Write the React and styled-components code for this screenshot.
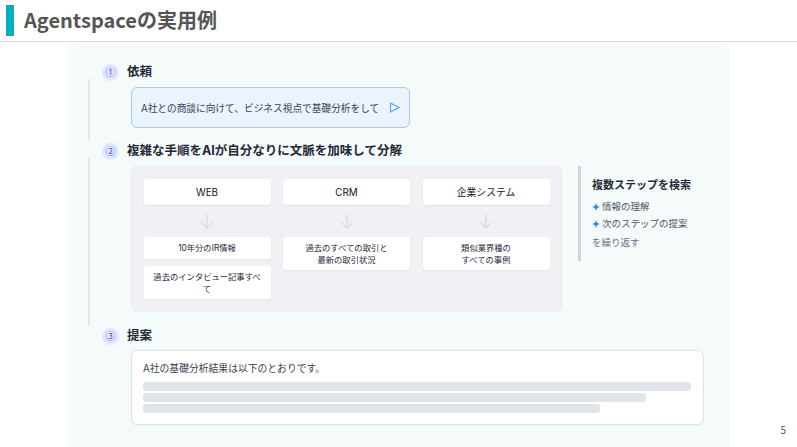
import React from "react";
import styled, { createGlobalStyle } from "styled-components";

const Global = createGlobalStyle`
  html, body { margin: 0; padding: 0; background: #fff; }
  body { font-family: Inter, "Noto Sans CJK JP", sans-serif; overflow: hidden; }
  * { box-sizing: border-box; }
`;
const Page = styled.div`
  width: 797px; height: 447px; display: flex; flex-direction: column; background: #fff; position: relative; overflow: hidden;
`;
const Header = styled.header`
  height: 42px; flex: none; display: flex; align-items: flex-start; gap: 10px; padding: 5px 0 0 6px; border-bottom: 1px solid #dedede;
`;
const Accent = styled.div`width: 8px; height: 31px; background: #00aebd;`;
const Title = styled.h1`
  margin: 0; font: 700 20px/30px "Noto Sans CJK JP", sans-serif; color: #555;
`;
const Main = styled.main`
  flex: 1; margin-left: 68px; width: 661px; background: #f5fafa; padding: 22px 0 0 20px; display: flex; flex-direction: column;
`;
const StepHead = styled.div`
  height: 16px; display: flex; align-items: center; gap: 8px; padding-left: 14px;
`;
const Badge = styled.span`
  width: 17px; height: 17px; border-radius: 50%; background: #e0e7ff; color: #4f46e5; display: flex; align-items: center; justify-content: center;
  font: 400 10px/1 "Noto Sans CJK JP", sans-serif;
`;
const StepTitle = styled.h2`
  margin: 0; font: 700 12.5px/16px Inter, "Noto Sans CJK JP", sans-serif; color: #1f2937;
`;
const Body = styled.div`
  margin-top: ${p => p.$top}px; padding: 8px 0 ${p => p.$bottom}px 41px; border-left: 2px solid ${p => p.$rail ? "#e5e7eb" : "transparent"};
  margin-bottom: ${p => p.$gap}px;
`;
const Prompt = styled.div`
  width: 279px; height: 41px; border: 1px solid #a6c9f8; border-radius: 6px; background: #eaf3fe; display: flex; align-items: center; justify-content: space-between;
  padding: 0 9px 0 9px; font-size: 9.7px; color: #374151;
`;
const Row = styled.div`display: flex; gap: 16px;`;
const Group = styled.div`
  width: 431px; height: 146px; background: #f0f0f5; border: 1px solid #eaeaef; border-radius: 6px; padding: 12px 11.5px; display: grid; grid-template-columns: repeat(3, 127px); column-gap: 12.5px; align-items: start;
`;
const Col = styled.div`display: flex; flex-direction: column; align-items: stretch;`;
const Source = styled.div`
  height: 26px; background: #fff; border-radius: 3px; box-shadow: 0 1px 2px rgba(0,0,0,.06); display: flex; align-items: center; justify-content: center; font-size: 9.8px; color: #111827;
`;
const ArrowWrap = styled.div`height: 32px; display: flex; align-items: center; justify-content: center; color: #d8dbe0;`;
const Detail = styled.div`
  background: #fff; border-radius: 3px; box-shadow: 0 1px 2px rgba(0,0,0,.06); padding: 4.5px 8px; margin-bottom: 7px; text-align: center; font-size: 8.3px; line-height: 12px; color: #1f2937; min-height: 22px; display: flex; align-items: center; justify-content: center; white-space: pre-line;
`;
const Note = styled.aside`
  width: 160px; height: 95px; border-left: 3px solid #d1d5db; padding: 12px 0 0 11px; 
`;
const NoteTitle = styled.div`font: 700 11px/14px Inter, "Noto Sans CJK JP", sans-serif; color: #1f2937; margin-bottom: 6px;`;
const NoteItem = styled.div`
  display: flex; align-items: center; gap: 2px; font-size: 9.5px; line-height: 17px; color: #4b5563;
`;
const Spark = styled.svg`width: 8px; height: 8px; fill: #3b82f6; flex: none;`;
const NoteFoot = styled.div`font-size: 9.5px; line-height: 17px; color: #6b7280; margin-top: 2px;`;
const Result = styled.div`
  width: 573px; height: 75px; background: #fff; border: 1px solid #dfe2e6; border-radius: 6px; padding: 11px 11px 0 11px; box-shadow: 0 1px 1px rgba(0,0,0,.03);
`;
const ResultText = styled.div`font-size: 9.8px; line-height: 14px; color: #374151; margin-bottom: 6px;`;
const Line = styled.div`height: 8.5px; border-radius: 3px; background: #e1e4e8; margin-bottom: 2.7px; width: ${p => p.$w}px;`;
const PageNo = styled.div`
  position: absolute; right: 11px; top: 423px; font: 400 10px/14px "Noto Sans CJK JP", sans-serif; color: #555;
`;

const Arrow = () => (
  <svg width="14" height="16" viewBox="0 0 14 16" fill="none" stroke="currentColor" strokeWidth="1.3">
    <path d="M7 1v14M1.5 9.5 7 15l5.5-5.5" />
  </svg>
);
const Sparkle = () => (
  <Spark viewBox="0 0 8 8"><path d="M4 0c.4 2.2 1.6 3.6 4 4-2.4.4-3.6 1.8-4 4-.4-2.2-1.6-3.6-4-4 2.4-.4 3.6-1.8 4-4z" /></Spark>
);

const columns = [
  { name: "WEB", details: ["10年分のIR情報", "過去のインタビュー記事すべて"] },
  { name: "CRM", details: ["過去のすべての取引と\n最新の取引状況"] },
  { name: "企業システム", details: ["類似業界種の\nすべての事例"] },
];

export default function App() {
  return (
    <Page>
      <Global />
      <Header>
        <Accent />
        <Title>Agentspaceの実用例</Title>
      </Header>
      <Main>
        <StepHead><Badge>①</Badge><StepTitle>依頼</StepTitle></StepHead>
        <Body $rail $top={-1} $bottom={13} $gap={2}>
          <Prompt>
            A社との商談に向けて、ビジネス視点で基礎分析をして
            <svg width="11" height="11" viewBox="0 0 11 11" fill="none" stroke="#60a5fa" strokeWidth="1.2"><path d="M1.5 1 10 5.5 1.5 10z" /></svg>
          </Prompt>
        </Body>
        <StepHead><Badge>②</Badge><StepTitle>複雑な手順をAIが自分なりに文脈を加味して分解</StepTitle></StepHead>
        <Body $rail $top={-1} $bottom={14} $gap={2}>
          <Row>
            <Group>
              {columns.map(c => (
                <Col key={c.name}>
                  <Source>{c.name}</Source>
                  <ArrowWrap><Arrow /></ArrowWrap>
                  {c.details.map(d => <Detail key={d}>{d}</Detail>)}
                </Col>
              ))}
            </Group>
            <Note>
              <NoteTitle>複数ステップを検索</NoteTitle>
              <NoteItem><Sparkle />情報の理解</NoteItem>
              <NoteItem><Sparkle />次のステップの提案</NoteItem>
              <NoteFoot>を繰り返す</NoteFoot>
            </Note>
          </Row>
        </Body>
        <StepHead><Badge>③</Badge><StepTitle>提案</StepTitle></StepHead>
        <Body $top={-2} $bottom={0} $gap={0}>
          <Result>
            <ResultText>A社の基礎分析結果は以下のとおりです。</ResultText>
            <Line $w={548} />
            <Line $w={503} />
            <Line $w={457} />
          </Result>
        </Body>
      </Main>
      <PageNo>5</PageNo>
    </Page>
  );
}
